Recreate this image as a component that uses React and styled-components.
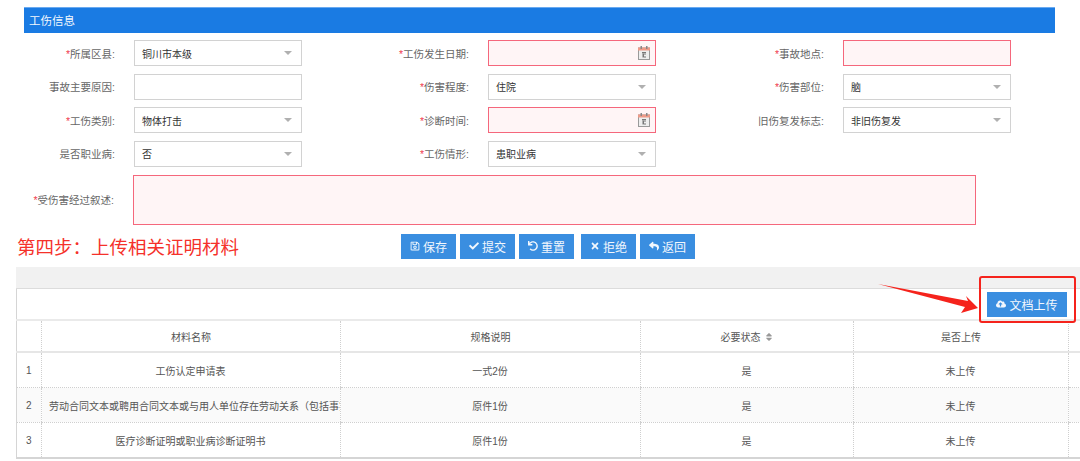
import React from 'react';
import styled, { createGlobalStyle } from 'styled-components';
import { FaCheck, FaCloudUploadAlt, FaRegSave, FaReply, FaSort, FaTimes, FaUndo } from 'react-icons/fa';

const GlobalStyle = createGlobalStyle`
  html, body {
    margin: 0;
    padding: 0;
    background: #fff;
    font-family: "Liberation Sans", "Noto Sans CJK SC", sans-serif;
  }
  * { box-sizing: border-box; }
`;

const Page = styled.div`
  position: relative;
  width: 1080px;
  height: 461px;
  overflow: hidden;
  padding-top: 7px;
`;

const TitleBar = styled.div`
  margin: 0 25px 0 24px;
  height: 26px;
  padding-left: 5px;
  line-height: 26px;
  font-size: 11.5px;
  color: #f2f7fd;
  background: #1a7be3;
  border-top: 1px solid #6aaaf0;
`;

const FormGrid = styled.div`
  display: grid;
  grid-template-columns: 302px 354px 355px;
  row-gap: 7.6px;
  margin-top: 7px;
`;

const Field = styled.div`
  display: flex;
  align-items: center;
  height: 26px;
`;

const Label = styled.label`
  flex: 1;
  padding-right: 19px;
  text-align: right;
  font-size: 10.5px;
  color: #666;
  white-space: nowrap;
`;

const Star = styled.span`
  color: #f0404f;
`;

const Control = styled.div`
  position: relative;
  display: flex;
  align-items: center;
  width: 168px;
  height: 26px;
  padding: 0 7px;
  font-size: 10px;
  color: #333;
  background: ${p => (p.$invalid ? '#fff5f6' : '#fff')};
  border: 1px solid ${p => (p.$invalid ? '#f5677c' : '#d2d2d2')};
`;

const Caret = styled.i`
  margin-left: auto;
  margin-right: 2px;
  border-left: 4px solid transparent;
  border-right: 4px solid transparent;
  border-top: 4px solid #b0b0b0;
`;

const CalendarWrap = styled.svg`
  margin-left: auto;
  margin-right: -2px;
  width: 12px;
  height: 14px;
`;

const TextRow = styled.div`
  display: flex;
  align-items: center;
  height: 50px;
  margin-top: 8px;
`;

const TextLabel = styled(Label)`
  flex: 0 0 133px;
`;

const TextBox = styled.div`
  width: 843px;
  height: 50px;
  background: #fff5f6;
  border: 1px solid #f5677c;
`;

const ActionRow = styled.div`
  display: flex;
  align-items: center;
  height: 26px;
  margin-top: 8.6px;
  padding-left: 17px;
`;

const StepTitle = styled.div`
  width: 384px;
  font-size: 18.5px;
  white-space: nowrap;
  color: #f5312a;
`;

const Buttons = styled.div`
  display: flex;
  gap: 4px;
`;

const Button = styled.button`
  display: flex;
  align-items: center;
  justify-content: center;
  gap: 3px;
  width: ${p => p.$width || 55}px;
  height: 25px;
  margin-left: ${p => p.$gapLeft || 0}px;
  padding: 0;
  border: 0;
  font-family: inherit;
  font-size: 12px;
  color: #f2f7fd;
  background: #3a8ee0;

  svg {
    font-size: 10px;
  }
`;

const FileSection = styled.div`
  margin: 8px 0 0 16px;
`;

const GrayBand = styled.div`
  height: 22px;
  background: #f1f1f1;
  border-bottom: 1px solid #dcdcdc;
`;

const Toolbar = styled.div`
  display: flex;
  justify-content: flex-end;
  align-items: center;
  height: 30px;
  padding-right: 13px;
  border-left: 1px solid #d5d5d5;
`;

const Table = styled.table`
  width: 1064px;
  table-layout: fixed;
  border-collapse: collapse;
  border-left: 1px solid #d5d5d5;
  border-bottom: 2px solid #d5d5d5;
  font-size: 10px;
  color: #555;
`;

const HeadCell = styled.th`
  height: 32px;
  padding: 0;
  font-weight: 400;
  text-align: center;
  border-top: 2px solid #eaeaea;
  border-bottom: 2px solid #e6e6e6;
  border-left: 1px dotted #cfcfcf;
  &:first-child { border-left: 0; }
`;

const Cell = styled.td`
  height: 35.3px;
  padding: 0 ${p => (p.$index ? 0 : 8)}px 0 ${p => (p.$index ? 9 : 7)}px;
  padding-right: ${p => (p.$clip ? 0 : undefined)};
  text-align: ${p => (p.$index ? 'left' : 'center')};
  white-space: nowrap;
  overflow: hidden;
  border-bottom: 1px dotted #cfcfcf;
  border-left: 1px dotted #cfcfcf;
  &:first-child { border-left: 0; }
`;

const Row = styled.tr`
  background: ${p => (p.$striped ? '#fafafa' : '#fff')};
`;

const SortIcon = styled(FaSort)`
  margin-left: 3px;
  font-size: 10px;
  color: #999;
  vertical-align: -1px;
`;

const Callout = styled.div`
  position: absolute;
  left: 979px;
  top: 276px;
  width: 97px;
  height: 47px;
  border: 2px solid #f5231c;
  border-radius: 3px;
`;

const Arrow = styled.svg`
  position: absolute;
  left: 876px;
  top: 282px;
  width: 104px;
  height: 34px;
`;

const Calendar = () => (
  <CalendarWrap viewBox="0 0 12 14">
    <rect x="0.5" y="2" width="11" height="11.5" fill="#eeeeee" stroke="#9a9a9a" />
    <rect x="0" y="1.5" width="12" height="3" fill="#ee9a88" />
    <rect x="2.5" y="0" width="1.5" height="3" fill="#888" />
    <rect x="8" y="0" width="1.5" height="3" fill="#888" />
    <path d="M4 6.5h4M5 6.5v5M8 8h-2.5v3h2.5" fill="none" stroke="#777" />
  </CalendarWrap>
);

const FormField = ({ label, required, value, kind, invalid }) => (
  <Field>
    <Label>
      {required && <Star>*</Star>}
      {label}:
    </Label>
    <Control $invalid={invalid}>
      {value}
      {kind === 'select' && <Caret />}
      {kind === 'date' && <Calendar />}
    </Control>
  </Field>
);

const fields = [
  { label: '所属区县', required: true, value: '铜川市本级', kind: 'select' },
  { label: '工伤发生日期', required: true, kind: 'date', invalid: true },
  { label: '事故地点', required: true, invalid: true },
  { label: '事故主要原因' },
  { label: '伤害程度', required: true, value: '住院', kind: 'select' },
  { label: '伤害部位', required: true, value: '脑', kind: 'select' },
  { label: '工伤类别', required: true, value: '物体打击', kind: 'select' },
  { label: '诊断时间', required: true, kind: 'date', invalid: true },
  { label: '旧伤复发标志', value: '非旧伤复发', kind: 'select' },
  { label: '是否职业病', value: '否', kind: 'select' },
  { label: '工伤情形', required: true, value: '患职业病', kind: 'select' },
];

const materials = [
  { name: '工伤认定申请表', spec: '一式2份' },
  { name: '劳动合同文本或聘用合同文本或与用人单位存在劳动关系（包括事实劳动关系）的证明材料', spec: '原件1份' },
  { name: '医疗诊断证明或职业病诊断证明书', spec: '原件1份' },
];

const App = () => (
  <Page>
    <GlobalStyle />
    <TitleBar>工伤信息</TitleBar>
    <FormGrid>
      {fields.map(f => (
        <FormField key={f.label} {...f} />
      ))}
    </FormGrid>
    <TextRow>
      <TextLabel>
        <Star>*</Star>受伤害经过叙述:
      </TextLabel>
      <TextBox />
    </TextRow>
    <ActionRow>
      <StepTitle>第四步：上传相关证明材料</StepTitle>
      <Buttons>
        <Button><FaRegSave />保存</Button>
        <Button><FaCheck />提交</Button>
        <Button><FaUndo />重置</Button>
        <Button $gapLeft={3}><FaTimes />拒绝</Button>
        <Button><FaReply />返回</Button>
      </Buttons>
    </ActionRow>
    <FileSection>
      <GrayBand />
      <Toolbar>
        <Button $width={80}><FaCloudUploadAlt />文档上传</Button>
      </Toolbar>
      <Table>
        <colgroup>
          <col width="25" />
          <col width="299" />
          <col width="300" />
          <col width="213" />
          <col width="215" />
          <col width="12" />
        </colgroup>
        <thead>
          <tr>
            <HeadCell />
            <HeadCell>材料名称</HeadCell>
            <HeadCell>规格说明</HeadCell>
            <HeadCell>必要状态<SortIcon /></HeadCell>
            <HeadCell>是否上传</HeadCell>
            <HeadCell />
          </tr>
        </thead>
        <tbody>
          {materials.map((m, i) => (
            <Row key={m.name} $striped={i === 1}>
              <Cell $index>{i + 1}</Cell>
              <Cell $clip={i === 1}>{m.name}</Cell>
              <Cell>{m.spec}</Cell>
              <Cell>是</Cell>
              <Cell>未上传</Cell>
              <Cell />
            </Row>
          ))}
        </tbody>
      </Table>
    </FileSection>
    <Callout />
    <Arrow viewBox="0 0 104 34">
      <path d="M2 2 L92 19 L90 14 L102 26 L85 31 L89 25 Z" fill="#f5231c" />
    </Arrow>
  </Page>
);

export default App;
